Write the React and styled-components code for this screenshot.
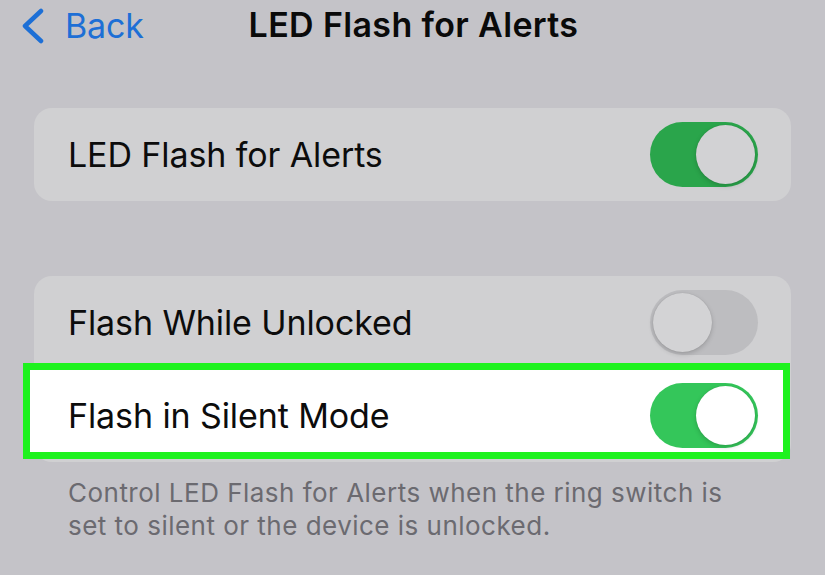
import React from "react";
import styled, { createGlobalStyle } from "styled-components";

const Global = createGlobalStyle`
  html, body {
    margin: 0;
    padding: 0;
    background: #c4c3c8;
  }
  body {
    font-family: Inter, "Noto Sans", "Liberation Sans", sans-serif;
    -webkit-font-smoothing: antialiased;
  }
`;

const Page = styled.div`
  width: 825px;
  height: 575px;
  overflow: hidden;
  background: #c4c3c8;
`;

const NavBar = styled.div`
  position: relative;
  height: 50px;
  display: flex;
  align-items: center;
  justify-content: center;
`;

const BackButton = styled.div`
  position: absolute;
  left: 20px;
  top: 5px;
  display: flex;
  align-items: center;
  gap: 19px;
  color: #1d6fd6;
  font-size: 34px;
  letter-spacing: -0.2px;
`;

const Title = styled.div`
  font-size: 34px;
  font-weight: 600;
  color: #0a0a0a;
  letter-spacing: 0.35px;
  margin-top: -2px;
  margin-left: 2px;
`;

const Content = styled.div`
  padding: 58px 34px 0 34px;
`;

const Card = styled.div`
  background: #d0d0d2;
  border-radius: 18px;
  margin-bottom: ${(p) => p.$gap || 0}px;
`;

const Row = styled.div`
  position: relative;
  height: 93px;
  display: flex;
  align-items: center;
  justify-content: space-between;
  padding: 0 33px 0 34px;
  font-size: 34px;
  color: #0c0c0c;
  letter-spacing: -0.1px;

  ${(p) =>
    p.$highlight &&
    `
    &::before {
      content: "";
      position: absolute;
      left: -11px;
      right: 1px;
      top: -6px;
      bottom: 3px;
      background: #ffffff;
      border: 7px solid #1ef21e;
      z-index: 0;
    }
  `}
`;

const Label = styled.span`
  position: relative;
  z-index: 1;
`;

const Track = styled.div`
  position: relative;
  z-index: 1;
  width: 108px;
  height: 65px;
  border-radius: 33px;
  background: ${(p) => p.$color};
  flex-shrink: 0;
`;

const Knob = styled.div`
  position: absolute;
  top: 3px;
  ${(p) => (p.$on ? "right: 3px;" : "left: 3px;")}
  width: 59px;
  height: 59px;
  border-radius: 50%;
  background: ${(p) => p.$color};
  box-shadow: 0 2px 5px rgba(0, 0, 0, 0.18), 0 0 1px rgba(0, 0, 0, 0.15);
`;

const Footer = styled.p`
  margin: 14px 0 0 34px;
  font-size: 26px;
  line-height: 33px;
  color: #6b6a70;
  letter-spacing: 0.48px;
  width: 665px;
`;

const Toggle = ({ on, track, knob }) => (
  <Track $color={track}>
    <Knob $on={on} $color={knob} />
  </Track>
);

const Chevron = () => (
  <svg width="26" height="36" viewBox="0 0 26 36">
    <path
      d="M21 3 L5 18 L21 33"
      fill="none"
      stroke="#1d6fd6"
      strokeWidth="4.5"
      strokeLinecap="round"
      strokeLinejoin="round"
    />
  </svg>
);

export default function App() {
  return (
    <Page>
      <Global />
      <NavBar>
        <BackButton>
          <Chevron />
          <span>Back</span>
        </BackButton>
        <Title>LED Flash for Alerts</Title>
      </NavBar>
      <Content>
        <Card $gap={75}>
          <Row>
            <Label>LED Flash for Alerts</Label>
            <Toggle on track="#2aa54b" knob="#d2d2d4" />
          </Row>
        </Card>
        <Card>
          <Row>
            <Label>Flash While Unlocked</Label>
            <Toggle track="#bdbdc0" knob="#d3d3d5" />
          </Row>
          <Row $highlight>
            <Label>Flash in Silent Mode</Label>
            <Toggle on track="#34c65a" knob="#ffffff" />
          </Row>
        </Card>
        <Footer>
          Control LED Flash for Alerts when the ring switch is set to silent
          or the device is unlocked.
        </Footer>
      </Content>
    </Page>
  );
}
